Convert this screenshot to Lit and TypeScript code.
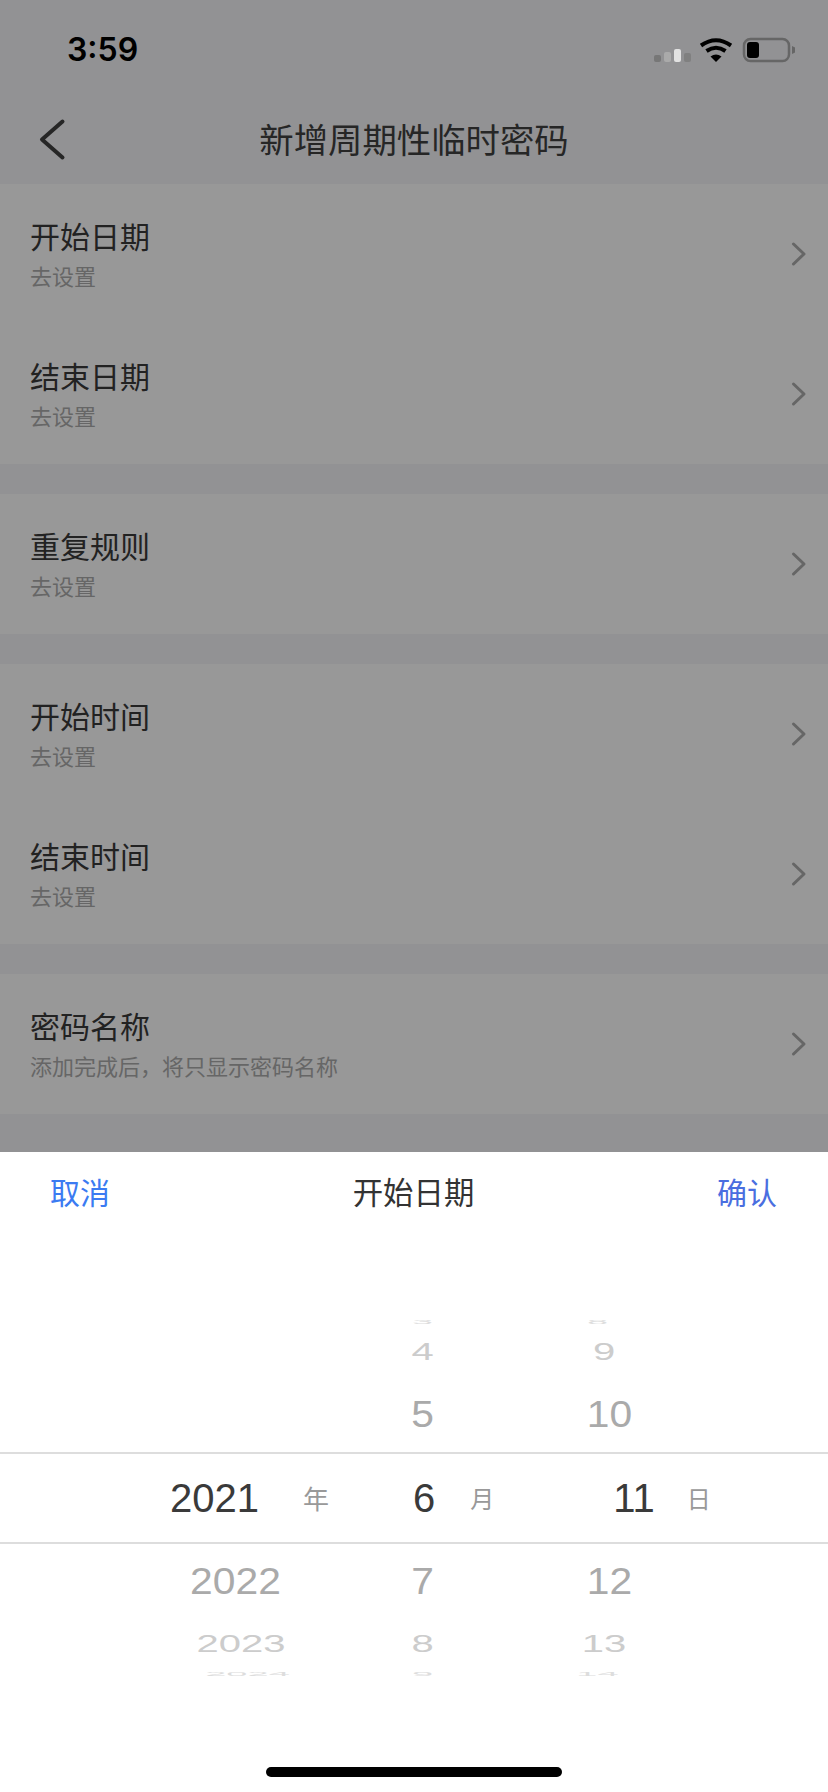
import { LitElement, html, css } from "lit";
import { customElement } from "lit/decorators.js";

interface Row { title: string; sub: string; }
const sections: Row[][] = [
  [{ title: "开始日期", sub: "去设置" }, { title: "结束日期", sub: "去设置" }],
  [{ title: "重复规则", sub: "去设置" }],
  [{ title: "开始时间", sub: "去设置" }, { title: "结束时间", sub: "去设置" }],
  [{ title: "密码名称", sub: "添加完成后，将只显示密码名称" }],
];

type WheelRow = [string, string, string, string];
const above: WheelRow[] = [
  ["r3", "", "3", "8"],
  ["r2", "", "4", "9"],
  ["r1", "", "5", "10"],
];
const below: WheelRow[] = [
  ["r1", "2022", "7", "12"],
  ["r2", "2023", "8", "13"],
  ["r3", "2024", "9", "14"],
];

@customElement("app-root")
export class AppRoot extends LitElement {
  static styles = css`
    :host {
      display: block;
      width: 828px;
      height: 1792px;
      overflow: hidden;
      background: #929294;
      font-family: "Noto Sans CJK SC", "Liberation Sans", sans-serif;
    }
    .page { display: flex; flex-direction: column; height: 1792px; }
    .status {
      height: 100px;
      display: flex;
      align-items: center;
      justify-content: space-between;
      padding: 0 31px 0 67px;
    }
    .time {
      font: 600 32px/1 Inter, "Liberation Sans", sans-serif;
      color: #000;
    }
    .status svg { display: block; }
    .nav {
      height: 84px;
      display: flex;
      align-items: center;
      justify-content: center;
      position: relative;
    }
    .back { position: absolute; left: 36px; top: 15px; display: block; }
    .nav h1 {
      margin: -8px 0 0;
      font-size: 34.4px;
      line-height: 48px;
      font-weight: 400;
      color: #262626;
    }
    .section { background: #989898; margin-bottom: 30px; }
    .row {
      height: 140px;
      box-sizing: border-box;
      display: flex;
      align-items: center;
      justify-content: space-between;
      padding: 0 21px 0 30px;
    }
    .row-text { display: flex; flex-direction: column; margin-top: -4px; }
    .row-title { font-size: 30px; line-height: 40px; color: #222; }
    .row-sub { font-size: 22px; line-height: 30px; color: #666; margin-top: 5px; }
    .sheet {
      margin-top: auto;
      height: 640px;
      background: #fff;
      display: flex;
      flex-direction: column;
    }
    .sheet-head {
      height: 78px;
      margin-bottom: 2px;
      display: flex;
      align-items: center;
      justify-content: space-between;
      padding: 0 51px 0 50px;
      font-size: 30px;
      line-height: 40px;
    }
    .cancel { color: #3b7bf2; }
    .confirm { color: #4a6ee0; }
    .sheet-title { color: #333; font-size: 30.4px; }
    .wheel { margin-top: 84px; }
    .wheel-row {
      display: grid;
      grid-template-columns: repeat(3, 187px);
      padding-left: 142px;
      font-family: "Liberation Sans", sans-serif;
      font-size: 40px;
      overflow: hidden;
    }
    .wheel-row > span { text-align: center; white-space: nowrap; --d: 0; }
    .wheel-row > .c1 { --d: 1; }
    .wheel-row > .c3 { --d: -1; }
    .r1 { height: 76px; line-height: 76px; color: #aaa; }
    .r1 > span { transform: scale(1.02, 0.9); }
    .current + .r1 > span { transform: translateY(-1px) scale(1.02, 0.9); }
    .r2 { height: 48px; line-height: 48px; color: #ccc; }
    .r2 > span { transform: translateX(calc(var(--d) * 5.5px)) scale(1, 0.58); }
    .r3 { height: 12px; line-height: 12px; color: #ddd; }
    .r3 > span { transform: translateX(calc(var(--d) * 12px)) scale(0.95, 0.15); }
    .current {
      height: 92px;
      box-sizing: border-box;
      border-top: 2px solid #ddd;
      border-bottom: 2px solid #ddd;
      display: flex;
      align-items: center;
      padding-left: 170px;
      font: 40px/1 "Liberation Sans", sans-serif;
      color: #3a3a3a;
    }
    .unit { font-family: "Noto Sans CJK SC", sans-serif; font-size: 26px; color: #999; }
    .u-year { margin-left: 44px; }
    .v-month { margin-left: 84px; }
    .u-month { margin-left: 35px; font-size: 24px; }
    .v-day { margin-left: 119px; }
    .u-day { margin-left: 32px; font-size: 24px; }
    .home {
      width: 296px;
      height: 10px;
      border-radius: 5px;
      background: #000;
      margin: 87px auto 0;
    }
  `;

  private chevron() {
    return html`<svg width="16" height="28" viewBox="0 0 16 28" fill="none">
      <path d="M2.5 4 L13 14 L2.5 24" stroke="#666" stroke-width="3" stroke-linecap="round" stroke-linejoin="round"></path>
    </svg>`;
  }

  private statusIcons() {
    return html`<svg width="143" height="28" viewBox="0 0 143 28">
      <rect x="0" y="19" width="7" height="7" rx="2" fill="#777"></rect>
      <rect x="10" y="16" width="7" height="10" rx="2" fill="#aaa"></rect>
      <rect x="20" y="13" width="7" height="13" rx="2" fill="#e2e2e2"></rect>
      <rect x="30" y="17" width="7" height="9" rx="2" fill="#808080"></rect>
      <g fill="none" stroke="#000" stroke-width="4">
        <path d="M47 9.500 Q62 -1 77 9.500"></path>
        <path d="M52.500 15 Q62 8.500 71.500 15"></path>
      </g>
      <path d="M62 26 L56.500 20.500 Q62 16.500 67.500 20.500 Z" fill="#000"></path>
      <rect x="90" y="3" width="45" height="22" rx="6.500" fill="none" stroke="#666" stroke-width="2.500"></rect>
      <rect x="93" y="6" width="12" height="16" rx="3" fill="#000"></rect>
      <path d="M138 10 L141 11.500 V16.500 L138 18 Z" fill="#666"></path>
    </svg>`;
  }

  private wheelRow(r: WheelRow) {
    return html`<div class="wheel-row ${r[0]}">
      <span class="c1">${r[1]}</span><span class="c2">${r[2]}</span><span class="c3">${r[3]}</span>
    </div>`;
  }

  render() {
    return html`<div class="page">
      <div class="status">
        <span class="time">3:59</span>
        ${this.statusIcons()}
      </div>
      <div class="nav">
        <svg class="back" width="32" height="48" viewBox="0 0 32 48" fill="none">
          <path d="M26.500 6.500 L6 24.500 L26.500 42.500" stroke="#262626" stroke-width="4" stroke-linecap="round" stroke-linejoin="round"></path>
        </svg>
        <h1>新增周期性临时密码</h1>
      </div>
      ${sections.map(
        (s) => html`<div class="section">
          ${s.map(
            (r) => html`<div class="row">
              <div class="row-text">
                <span class="row-title">${r.title}</span>
                <span class="row-sub">${r.sub}</span>
              </div>
              ${this.chevron()}
            </div>`
          )}
        </div>`
      )}
      <div class="sheet">
        <div class="sheet-head">
          <span class="cancel">取消</span>
          <span class="sheet-title">开始日期</span>
          <span class="confirm">确认</span>
        </div>
        <div class="wheel">
          ${above.map((r) => this.wheelRow(r))}
          <div class="current">
            <span>2021</span><span class="unit u-year">年</span>
            <span class="v-month">6</span><span class="unit u-month">月</span>
            <span class="v-day">11</span><span class="unit u-day">日</span>
          </div>
          ${below.map((r) => this.wheelRow(r))}
        </div>
        <div class="home"></div>
      </div>
    </div>`;
  }
}
